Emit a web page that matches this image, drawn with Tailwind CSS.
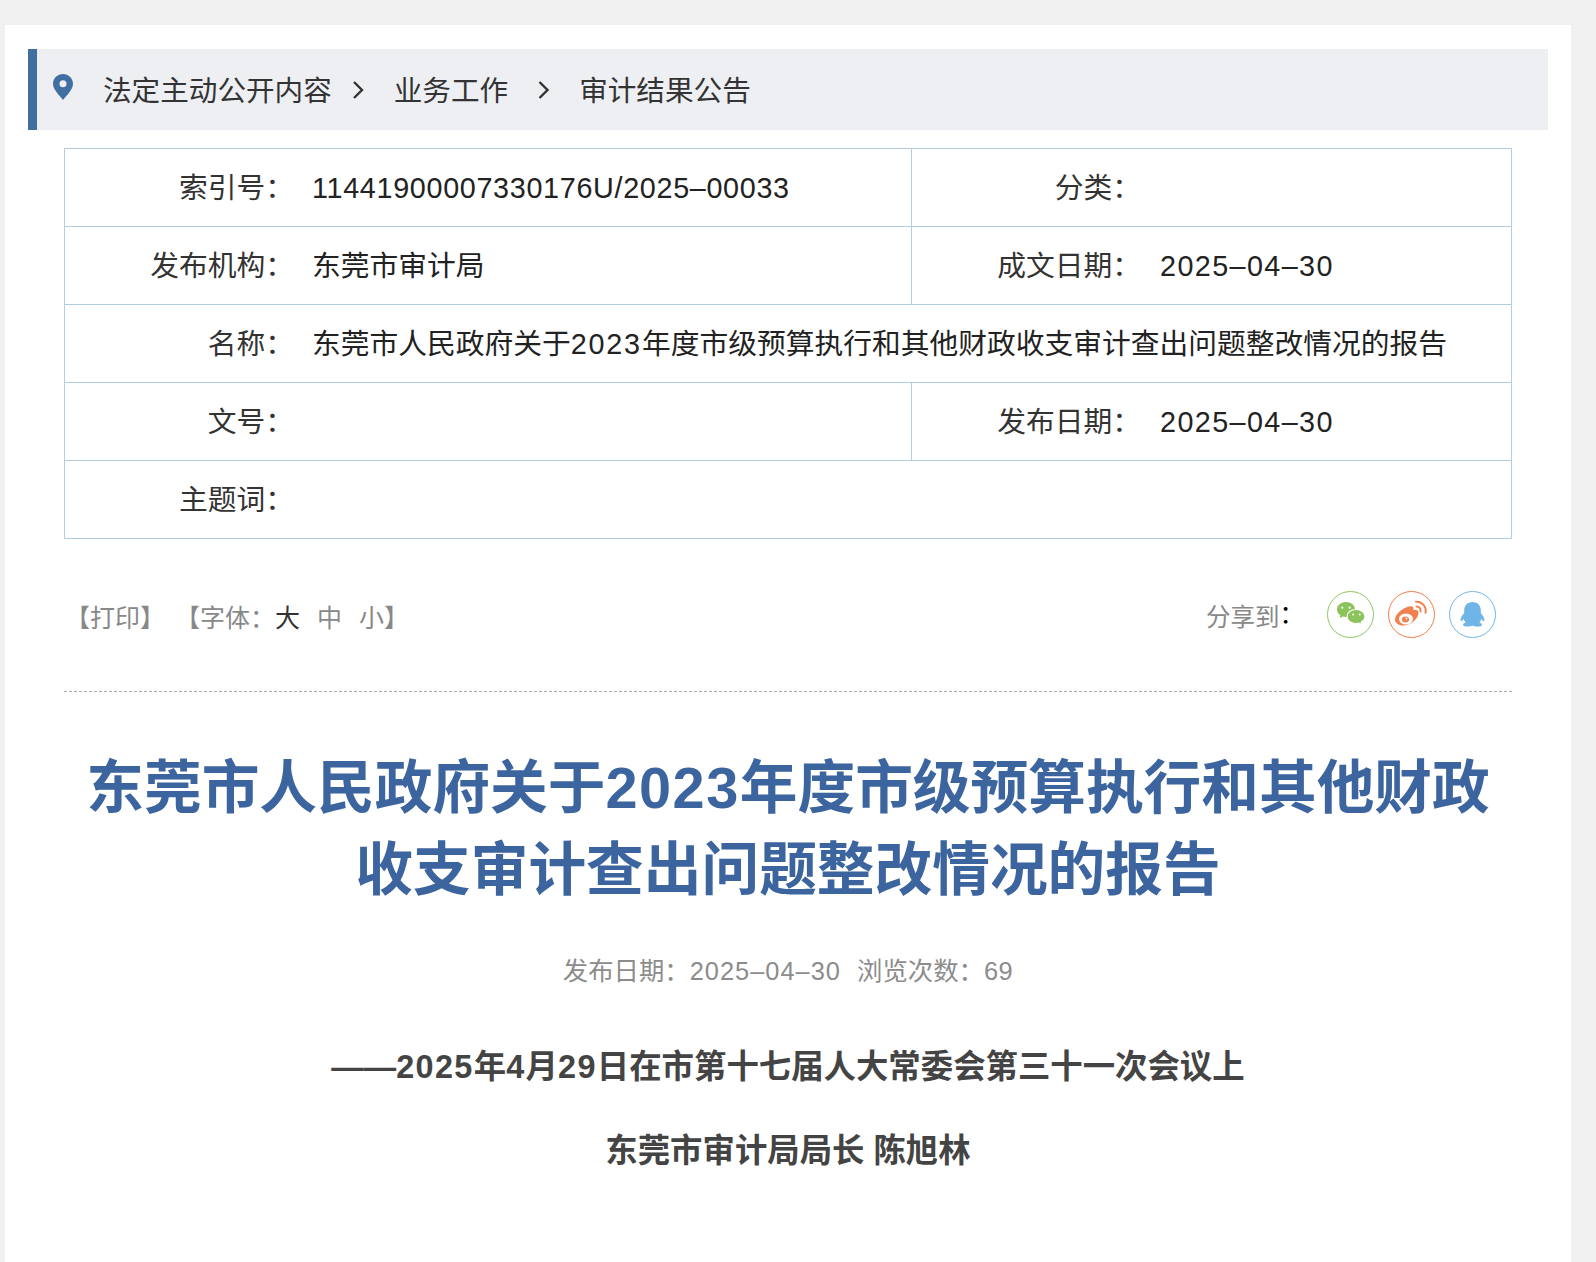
<!DOCTYPE html>
<html lang="zh">
<head>
<meta charset="utf-8">
<title>审计结果公告</title>
<script src="https://cdn.jsdelivr.net/npm/@tailwindcss/browser@4"></script>
</head>
<body class="bg-[#f0f0f0] font-['Liberation_Sans','Noto_Sans_CJK_SC',sans-serif] h-[1262px] overflow-hidden">
<div class="pt-[25px] pl-[5px] pr-[25px]">
  <main class="bg-white h-[1237px] pt-[24px] px-[23px]">
    <!-- Breadcrumb -->
    <nav class="flex items-center h-[81px] w-[1520px] pt-[4px] bg-[#eeeff3] border-l-[9px] border-[#416fa2] text-[28.6px] text-[#333]">
      <svg class="w-[20px] h-[26px] ml-[16px] mr-[30px] mb-[10px]" viewBox="0 0 20 26"><path fill="#416fa2" fill-rule="evenodd" d="M10 0C4.500 0 0 4.400 0 9.800 0 15.500 6 21 10 26c4-5 10-10.500 10-16.200C20 4.400 15.500 0 10 0zm0 6.300a3.500 3.500 0 1 1 0 7 3.500 3.500 0 0 1 0-7z"/></svg>
      <span>法定主动公开内容</span>
      <svg class="w-[12px] h-[18px] ml-[20px] mr-[30px] mb-[4px]" viewBox="0 0 12 18"><path d="M2 1l8 8-8 8" fill="none" stroke="#333" stroke-width="2.400"/></svg>
      <span>业务工作</span>
      <svg class="w-[13px] h-[18px] ml-[29px] mr-[29px] mb-[4px]" viewBox="0 0 12 18"><path d="M2 1l8 8-8 8" fill="none" stroke="#333" stroke-width="2.400"/></svg>
      <span>审计结果公告</span>
    </nav>

    <!-- Meta table -->
    <section class="mt-[18px] mx-[36px] border border-[#b3cde2] text-[28.750px] text-[#222]">
      <div class="flex h-[78px] border-b border-[#b3cde2]">
        <div class="flex items-center w-[847px] pt-[3px] border-r border-[#b3cde2]">
          <span class="w-[229px] text-right text-[#333]">索引号：</span>
          <span class="ml-[18px] tracking-[0.67px]">11441900007330176U/2025–00033</span>
        </div>
        <div class="flex items-center flex-1 pt-[3px]">
          <span class="w-[229px] text-right text-[#333]">分类：</span>
        </div>
      </div>
      <div class="flex h-[78px] border-b border-[#b3cde2]">
        <div class="flex items-center w-[847px] pt-[3px] border-r border-[#b3cde2]">
          <span class="w-[229px] text-right text-[#333]">发布机构：</span>
          <span class="ml-[18px]">东莞市审计局</span>
        </div>
        <div class="flex items-center flex-1 pt-[3px]">
          <span class="w-[229px] text-right text-[#333]">成文日期：</span>
          <span class="ml-[19px] tracking-[1.4px]">2025–04–30</span>
        </div>
      </div>
      <div class="flex items-center h-[78px] pt-[3px] border-b border-[#b3cde2]">
        <span class="w-[229px] text-right text-[#333]">名称：</span>
        <span class="ml-[18px]">东莞市人民政府关于<span class="tracking-[1.8px]">2023</span>年度市级预算执行和其他财政收支审计查出问题整改情况的报告</span>
      </div>
      <div class="flex h-[78px] border-b border-[#b3cde2]">
        <div class="flex items-center w-[847px] pt-[3px] border-r border-[#b3cde2]">
          <span class="w-[229px] text-right text-[#333]">文号：</span>
        </div>
        <div class="flex items-center flex-1 pt-[3px]">
          <span class="w-[229px] text-right text-[#333]">发布日期：</span>
          <span class="ml-[19px] tracking-[1.4px]">2025–04–30</span>
        </div>
      </div>
      <div class="flex items-center h-[77px] pt-[3px]">
        <span class="w-[229px] text-right text-[#333]">主题词：</span>
      </div>
    </section>

    <!-- Print / font size / share -->
    <div class="flex items-center justify-between h-[153px] mx-[36px] border-b border-dashed border-[#aaa] pb-[2px]">
      <div class="flex items-center text-[25px] text-[#888] ml-[1px] mt-[9px]">
        <span>【打印】</span>
        <span class="ml-[10px]">【字体：</span>
        <span class="text-[#333]">大</span>
        <span class="ml-[17px]">中</span>
        <span class="ml-[17px]">小】</span>
      </div>
      <div class="flex items-center mr-[16px]">
        <span class="text-[24.5px] text-[#888] mr-[23px] mt-[8px]">分享到<span class="text-black relative -top-[3px]">：</span></span>
        <div class="flex gap-[14px]">
          <svg class="w-[47px] h-[47px]" viewBox="0 0 47 47">
            <circle cx="23.500" cy="23.500" r="23" fill="none" stroke="#8dc665"/>
            <path fill="#8bc45a" d="M19 11c-5 0-9 3.300-9 7.400 0 2.400 1.300 4.400 3.400 5.800l-.7 3 3.200-1.700c1 .3 2 .4 3.100.4 5 0 9-3.300 9-7.500S24 11 19 11z"/>
            <path fill="#8bc45a" stroke="#fff" stroke-width="1.200" d="M29 18.500c-5 0-9 3.100-9 7s4 7 9 7c1 0 2-.1 2.900-.4l3.100 1.700-.8-2.800c2.300-1.300 3.800-3.300 3.800-5.500 0-3.900-4-7-9-7z"/>
            <circle cx="15.300" cy="16.700" r="1.100" fill="#fff"/><circle cx="22.700" cy="16.700" r="1.100" fill="#fff"/>
            <circle cx="26" cy="23.500" r="1" fill="#fff"/><circle cx="32.700" cy="23.500" r="1" fill="#fff"/>
          </svg>
          <svg class="w-[47px] h-[47px]" viewBox="0 0 47 47">
            <circle cx="23.500" cy="23.500" r="23" fill="none" stroke="#f27c4b"/>
            <path fill="#ef8250" d="M21 15.500c3.500-1 5.200.5 4.300 3.600 2.600-.8 5.300.3 5.200 3-.1 5.500-7 12.500-15.500 12.500-4.500 0-8-2.500-8-6 0-5 7-11.800 14-13.100z"/>
            <ellipse cx="18" cy="28" rx="7" ry="5.500" fill="#fff"/>
            <ellipse cx="17.500" cy="28.500" rx="3.600" ry="3" fill="#ef8250"/>
            <circle cx="18.500" cy="27.500" r="1" fill="#fff"/>
            <path d="M28.500 15.500c2.700 0 4.600 2.300 4 5M28 10.800c6-.4 10.800 4.800 9.500 11" fill="none" stroke="#ef8250" stroke-width="2" stroke-linecap="round"/>
          </svg>
          <svg class="w-[47px] h-[47px]" viewBox="0 0 47 47">
            <circle cx="23.500" cy="23.500" r="23" fill="none" stroke="#72b6e8"/>
            <path fill="#6fb5e8" d="M23.500 11c-5 0-8.300 3.600-8.300 8v3c-1.800 2.300-3.800 5-3.700 7 .1 1 .7 1.300 1.400.9.800-.4 1.300-1.200 1.700-1.800.3 1.300 1 2.500 2 3.400-1.500.5-2.700 1.200-2.500 2.400.2 1.300 2 1.600 4 1.600 2.200 0 4.600-.4 5.400-1 .8.600 3.200 1 5.400 1 2 0 3.800-.3 4-1.600.2-1.200-1-1.900-2.500-2.400 1-.9 1.700-2.100 2-3.400.4.600.9 1.400 1.700 1.800.7.400 1.300.1 1.400-.9.100-2-1.900-4.700-3.700-7v-3c0-4.400-3.300-8-8.300-8z"/>
          </svg>
        </div>
      </div>
    </div>

    <!-- Article heading -->
    <article class="mx-[36px] text-center">
      <h1 class="mt-[56px] text-[57.700px] leading-[81.500px] font-bold text-[#3c659f]">
        <span class="block">东莞市人民政府关于<span class="tracking-[1.5px]">2023</span>年度市级预算执行和其他财政</span>
        <span class="block">收支审计查出问题整改情况的报告</span>
      </h1>
      <p class="mt-[41px] text-[25.400px] text-[#8c8c8c]">发布日期：<span class="tracking-[1px]">2025–04–30</span>&nbsp;&nbsp;<span class="ml-[2px]">浏览次数：</span><span class="tracking-[0.5px]">69</span></p>
      <p class="mt-[53px] text-[32.400px] font-bold text-[#444]">——<span class="tracking-[1.4px]">2025</span>年<span class="tracking-[1.4px]">4</span>月<span class="tracking-[1.4px]">29</span>日在市第十七届人大常委会第三十一次会议上</p>
      <p class="mt-[35px] text-[32.400px] font-bold text-[#444]">东莞市审计局局长 陈旭林</p>
    </article>
  </main>
</div>
</body>
</html>
